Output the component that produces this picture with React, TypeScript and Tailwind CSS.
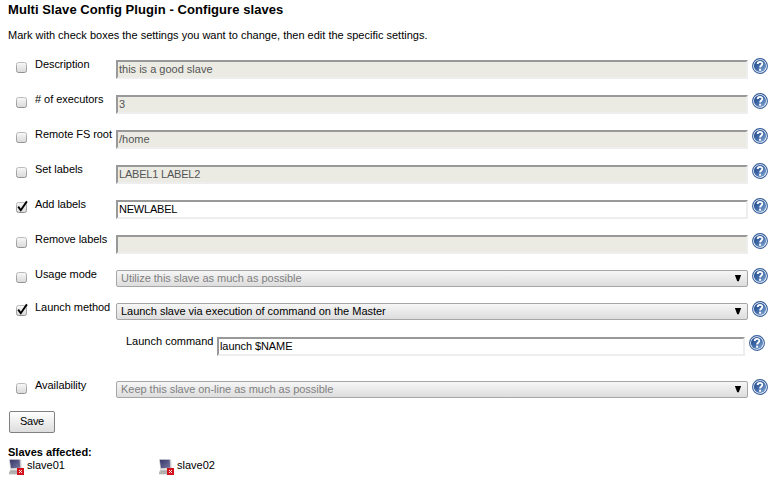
import type { ReactNode } from 'react';

function HelpIcon() {
  return (
    <svg viewBox="0 0 16 16" className="block h-4 w-4 shrink-0">
      <defs>
        <linearGradient id="help" x1="0" y1="0" x2="1" y2="1">
          <stop offset="0" stopColor="#1f4689" />
          <stop offset="0.5" stopColor="#416ba8" />
          <stop offset="1" stopColor="#8fb2dc" />
        </linearGradient>
      </defs>
      <circle cx="8" cy="8" r="7.4" fill="#fff" stroke="#365f9c" strokeWidth="1.1" />
      <circle cx="8" cy="8" r="6.1" fill="url(#help)" />
      <path d="M5.7 6C5.7 3.1 10.4 3.2 10.3 5.9C10.2 7.5 8.1 7.5 8.1 9.6" fill="none" stroke="#fff" strokeWidth="1.9" />
      <rect x="7.1" y="10.7" width="2" height="2" fill="#fff" />
    </svg>
  );
}

function Checkbox({ checked }: { checked?: boolean }) {
  return (
    <svg viewBox="0 0 12 12" className="ml-2 mt-1.5 block h-3 w-3 shrink-0 overflow-visible">
      <defs>
        <linearGradient id="box" x1="0" y1="0" x2="0" y2="1">
          <stop offset="0" stopColor="#f8f8f8" />
          <stop offset="1" stopColor="#d9d9d9" />
        </linearGradient>
        <linearGradient id="edge" x1="0" y1="0" x2="0" y2="1">
          <stop offset="0" stopColor="#bcbcbc" />
          <stop offset="1" stopColor="#929292" />
        </linearGradient>
      </defs>
      <rect x="0.5" y="0.5" width="10" height="10" rx="2" fill="url(#box)" stroke="url(#edge)" />
      {checked && <path d="M2.2 4.6L4.8 8.2L10.9 -0.6" fill="none" stroke="#000" strokeWidth="1.9" />}
    </svg>
  );
}

function TextBox({ value, disabled, tracking = '' }: { value: string; disabled?: boolean; tracking?: string }) {
  return (
    <div
      className={`mt-1 h-[19px] min-w-0 flex-1 border-2 border-t-[#999] border-r-[#eee] border-b-[#eee] border-l-[#999] pl-px leading-[15px] ${tracking} ${
        disabled ? 'bg-[#ebebe4] text-[#545454]' : 'bg-white text-black'
      }`}
    >
      {value}
    </div>
  );
}

function Select({ value, disabled }: { value: string; disabled?: boolean }) {
  return (
    <div
      className={`mt-1 flex h-[17px] min-w-0 flex-1 justify-between rounded-[2px] border border-[#a6a6a6] bg-linear-to-b from-[#f6f6f6] to-[#dddddd] pr-1.5 pl-1 leading-[15px] tracking-[-0.025px] ${
        disabled ? 'text-[#808080]' : 'text-black'
      }`}
    >
      <span>{value}</span>
      <svg viewBox="0 0 6 6" className="mt-1 h-1.5 w-1.5 overflow-visible">
        <path d="M-.1 0H6.1L3.8 6.3H2.2Z" fill="#000" />
      </svg>
    </div>
  );
}

function Row({ label, checked, height, children }: { label: string; checked?: boolean; height: string; children: ReactNode }) {
  return (
    <div className={`flex items-start ${height}`}>
      <Checkbox checked={checked} />
      <div className="ml-[7px] w-[81px] shrink-0 whitespace-nowrap leading-4 tracking-[-0.05px]">{label}</div>
      {children}
      <div className="ml-1 pt-0.5">
        <HelpIcon />
      </div>
    </div>
  );
}

function Computer() {
  return (
    <svg viewBox="0 0 16 16" className="mr-[3px] h-4 w-4 shrink-0">
      <defs>
        <linearGradient id="screen" x1="0" y1="0" x2="1" y2="1">
          <stop offset="0" stopColor="#35356a" />
          <stop offset="1" stopColor="#77779f" />
        </linearGradient>
      </defs>
      <path d="M1 .5H13.2L13.6 9L10 11.5L12 15.5H1L1 13L2.5 10.5Z" fill="#c9c9c9" />
      <path d="M1.8 .8H11.6L12.2 8.8L3 9.3Z" fill="url(#screen)" />
      <path d="M3 10.3L9 10" stroke="#f0f0f0" strokeWidth="1" />
      <path d="M2.5 12.2H9M1.2 14H9" stroke="#929292" strokeWidth=".8" />
      <rect x="9" y="9" width="7" height="7" fill="#d4101a" />
      <path d="M11 11L14 14M14 11L11 14" stroke="#fff" strokeWidth="0.9" />
    </svg>
  );
}

const fields = [
  { label: 'Description', value: 'this is a good slave' },
  { label: '# of executors', value: '3' },
  { label: 'Remote FS root', value: '/home' },
  { label: 'Set labels', value: 'LABEL1 LABEL2', tracking: 'tracking-[-0.2px]' },
  { label: 'Add labels', value: 'NEWLABEL', checked: true, tracking: 'tracking-[-0.22px]' },
  { label: 'Remove labels', value: '' },
];

export default function App() {
  return (
    <main className="h-[481px] w-[772px] overflow-hidden bg-white pr-1 pl-2 font-['Liberation_Sans',Arial,sans-serif] text-[11px] text-black">
      <h1 className="pt-0.5 text-[13px] leading-4 font-bold tracking-[0.07px]">Multi Slave Config Plugin - Configure slaves</h1>
      <p className="mt-[9px] mb-[13px] leading-4">
        Mark with check boxes the settings you want to change, then edit the specific settings.
      </p>
      {fields.map((f) => (
        <Row key={f.label} label={f.label} checked={f.checked} height="h-[35px]">
          <TextBox value={f.value} disabled={!f.checked} tracking={f.tracking} />
        </Row>
      ))}
      <Row label="Usage mode" height="h-[33px]">
        <Select value="Utilize this slave as much as possible" disabled />
      </Row>
      <Row label="Launch method" checked height="h-[34px]">
        <Select value="Launch slave via execution of command on the Master" />
      </Row>
      <div className="flex h-11 items-start pr-[3px] pl-[118px]">
        <div className="w-[91px] shrink-0 leading-4">Launch command</div>
        <TextBox value="launch $NAME" tracking="tracking-[-0.08px]" />
        <div className="ml-1 pt-0.5">
          <HelpIcon />
        </div>
      </div>
      <Row label="Availability" height="h-[34px]">
        <Select value="Keep this slave on-line as much as possible" disabled />
      </Row>
      <button className="ml-px block h-[22px] w-[46px] rounded-[2px] border border-[#808080] bg-linear-to-b from-white to-[#dddddd] pb-0.5 leading-[18px] tracking-[-0.3px]">
        Save
      </button>
      <h2 className="mt-[13px] leading-[13px] font-bold">Slaves affected:</h2>
      <div className="flex">
        {['slave01', 'slave02'].map((name) => (
          <div key={name} className="flex w-[150px] leading-[13px]">
            <Computer />
            {name}
          </div>
        ))}
      </div>
    </main>
  );
}
